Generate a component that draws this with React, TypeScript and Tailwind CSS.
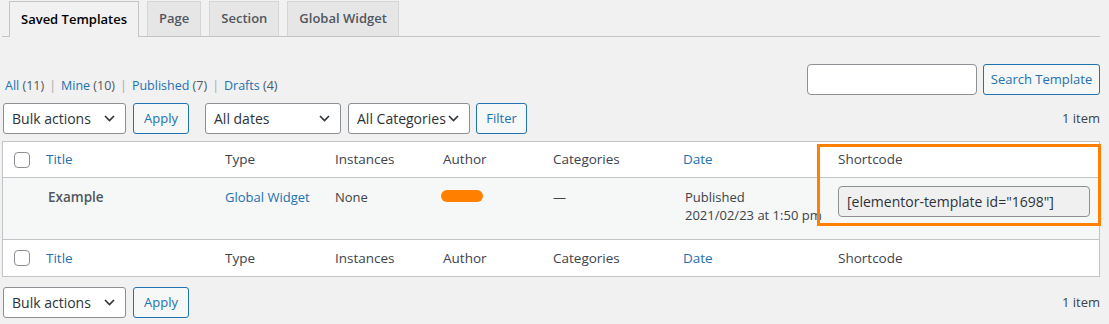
import React from "react";

const Chevron = () => (
  <svg width="11" height="7" viewBox="0 0 11 7" className="shrink-0">
    <path d="M1 1l4.5 4.5L10 1" fill="none" stroke="#2c3338" strokeWidth="1.6" />
  </svg>
);

const Select = ({ label, w }: { label: string; w: string }) => (
  <div
    className={`${w} h-[31px] flex items-center justify-between pl-[8px] pr-[10px] bg-white border border-[#8c8f94] rounded-[3px] text-[14px] text-[#2c3338]`}
  >
    <span>{label}</span>
    <Chevron />
  </div>
);

const Btn = ({ label, w }: { label: string; w: string }) => (
  <div
    className={`${w} h-[31px] flex items-center justify-center bg-[#f6f7f7] border border-[#2271b1] rounded-[3px] text-[13px] text-[#2271b1]`}
  >
    {label}
  </div>
);

const Check = () => (
  <div className="w-[16px] h-[16px] bg-white border border-[#8c8f94] rounded-[4px]" />
);

const cols = "grid grid-cols-[33px_179px_110px_108px_110px_130px_155px_1fr]";

const HeadRow = ({ top }: { top?: boolean }) => (
  <div
    className={`${cols} items-center text-[13.5px] ${top ? "h-[36px] border-b border-[#c3c4c7]" : "h-[37px] border-t border-[#c3c4c7]"}`}
  >
    <div className="pl-[11px]">
      <Check />
    </div>
    <div className="pl-[10px] text-[#2271b1]">Title</div>
    <div className="pl-[10px]">Type</div>
    <div className="pl-[10px]">Instances</div>
    <div className="pl-[10px]">Author</div>
    <div className="pl-[10px]">Categories</div>
    <div className="pl-[10px] text-[#2271b1]">Date</div>
    <div className="pl-[10px]">Shortcode</div>
  </div>
);

const Sep = () => <span className="text-[#a7aaad] mx-[5px]">|</span>;

export default function App() {
  return (
    <div className="min-h-screen bg-[#f1f1f1] font-['Open_Sans',sans-serif] text-[13px] text-[#3c434a] pl-[2px] pr-[9px] pt-[1px]">
      {/* tabs */}
      <div className="flex items-end border-b border-[#c3c4c7] pl-[7px] text-[13px] font-semibold">
        <div className="h-[36px] -mb-px px-[11px] flex items-center bg-[#f1f1f1] border border-b-0 border-[#c3c4c7] text-[#000]">
          Saved Templates
        </div>
        {["Page", "Section", "Global Widget"].map((t) => (
          <div
            key={t}
            className="ml-[8px] h-[35px] px-[11px] flex items-center bg-[#e6e6e6] border border-b-0 border-[#d5d5d5] text-[#50575e]"
          >
            {t}
          </div>
        ))}
      </div>

      {/* filters + search */}
      <div className="mt-[27px] flex items-end justify-between">
        <div className="pl-[3px] leading-[20px] mb-[-1px] text-[12.5px]">
          <span className="text-[#2271b1]">All</span>{" "}
          <span className="text-[#50575e]">(11)</span>
          <Sep />
          <span className="text-[#2271b1]">Mine</span>{" "}
          <span className="text-[#50575e]">(10)</span>
          <Sep />
          <span className="text-[#2271b1]">Published</span>{" "}
          <span className="text-[#50575e]">(7)</span>
          <Sep />
          <span className="text-[#2271b1]">Drafts</span>{" "}
          <span className="text-[#50575e]">(4)</span>
        </div>
        <div className="flex gap-[6px]">
          <div className="w-[170px] h-[31px] bg-white border border-[#8c8f94] rounded-[4px]" />
          <Btn label="Search Template" w="w-[117px]" />
        </div>
      </div>

      <div className="mt-[8px] flex items-center">
        <div className="ml-[1px]">
          <Select label="Bulk actions" w="w-[123px]" />
        </div>
        <div className="ml-[7px]">
          <Btn label="Apply" w="w-[56px]" />
        </div>
        <div className="ml-[16px]">
          <Select label="All dates" w="w-[136px]" />
        </div>
        <div className="ml-[7px]">
          <Select label="All Categories" w="w-[122px]" />
        </div>
        <div className="ml-[6px]">
          <Btn label="Filter" w="w-[51px]" />
        </div>
        <div className="ml-auto text-[13px]">1 item</div>
      </div>

      {/* table */}
      <div className="relative mt-[7px] bg-white border border-[#c3c4c7]">
        <HeadRow top />
        <div className={`${cols} h-[61px] bg-[#f6f7f7] text-[13px] leading-[18px]`}>
          <div />
          <div className="pl-[12px] pt-[10px] font-semibold text-[#50575e] text-[13.5px]">Example</div>
          <div className="pl-[10px] pt-[10px] text-[#2271b1]">Global Widget</div>
          <div className="pl-[10px] pt-[10px]">None</div>
          <div className="pl-[8px] pt-[12px]">
            <div className="w-[42px] h-[12px] rounded-full bg-[#ff7f00]" />
          </div>
          <div className="pl-[10px] pt-[10px]">—</div>
          <div className="pl-[12px] pt-[10px]">
            <div>Published</div>
            <div className="whitespace-nowrap">2021/02/23 at 1:50 pm</div>
          </div>
          <div className="pl-[10px] pr-[9px] pt-[8px]">
            <div className="h-[31px] flex items-center pl-[8px] bg-[#f0f0f1] border border-[#8c8f94] rounded-[4px] text-[14px] text-[#2c3338]">
              [elementor-template id="1698"]
            </div>
          </div>
        </div>
        <HeadRow />
        <div className="absolute left-[814px] top-[2px] w-[284px] h-[82px] border-[3px] border-[#ff7f00]" />
      </div>

      <div className="mt-[10px] flex items-center">
        <div className="ml-[1px]">
          <Select label="Bulk actions" w="w-[123px]" />
        </div>
        <div className="ml-[7px]">
          <Btn label="Apply" w="w-[56px]" />
        </div>
        <div className="ml-auto text-[13px]">1 item</div>
      </div>
    </div>
  );
}
